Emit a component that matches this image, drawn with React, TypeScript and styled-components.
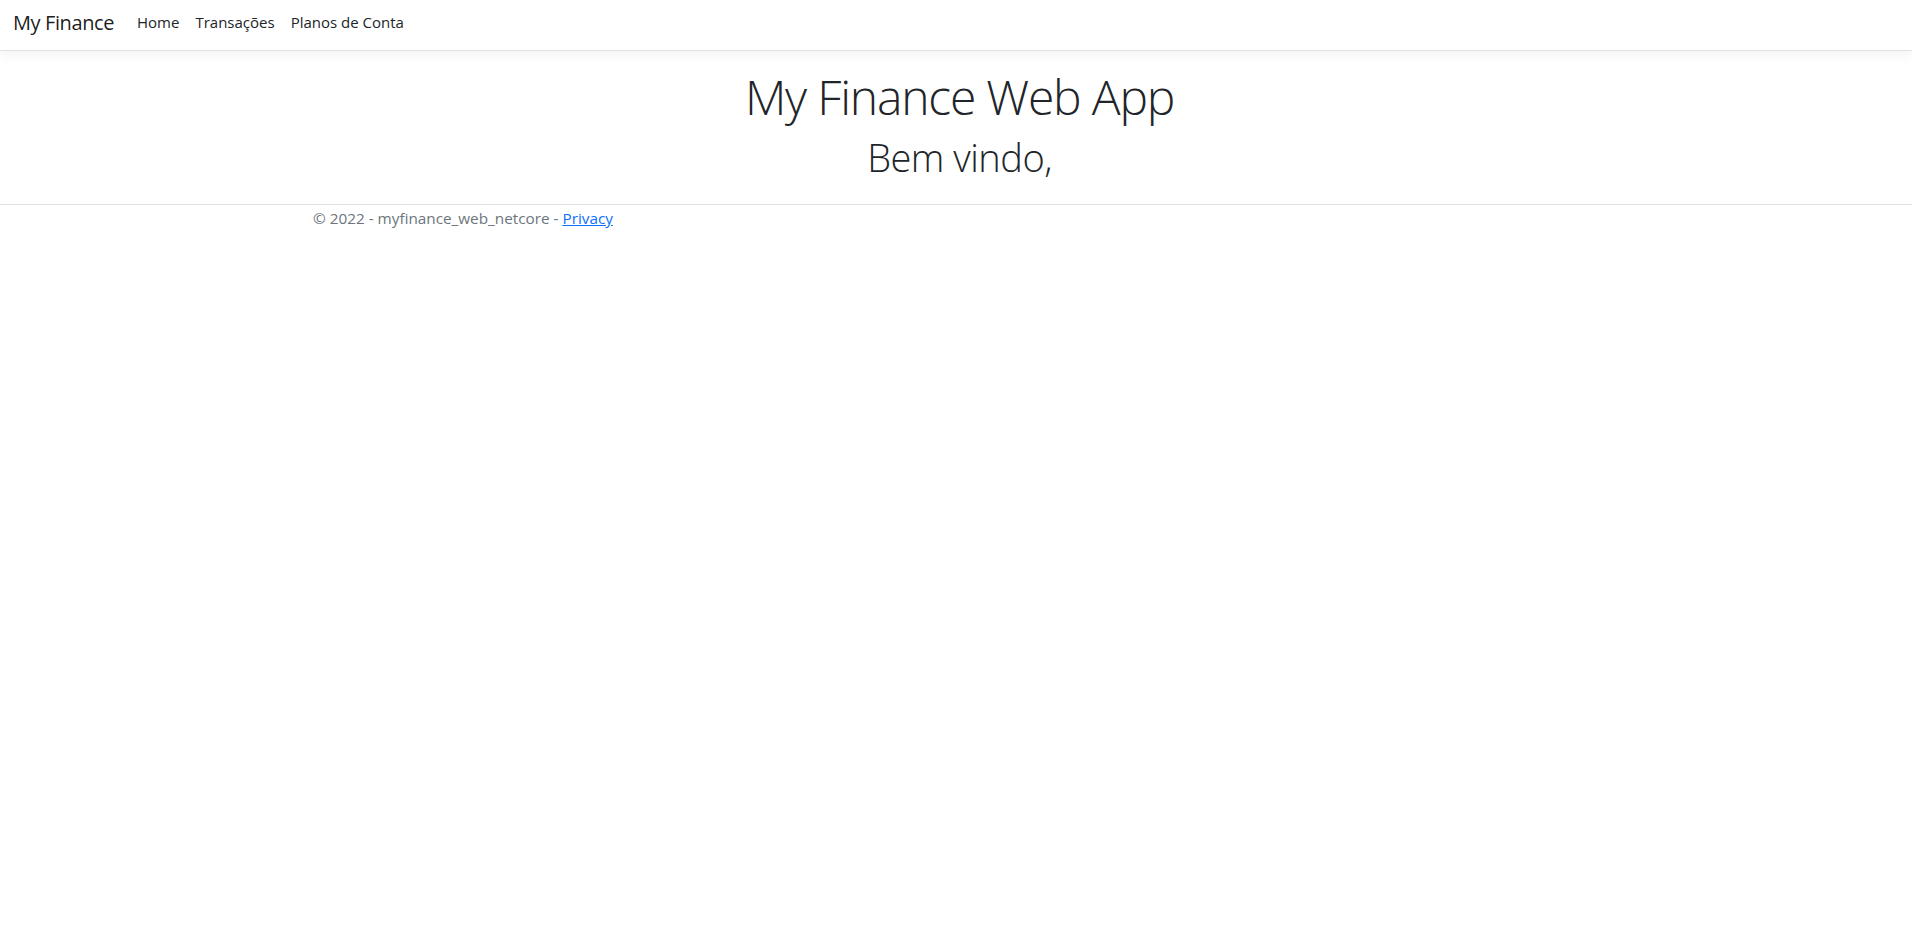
import { FC } from 'react';
import styled, { createGlobalStyle } from 'styled-components';

const GlobalStyle = createGlobalStyle`
  html, body {
    margin: 0;
    padding: 0;
    background: #fff;
  }
  body {
    font-family: 'Open Sans', 'Noto Sans', sans-serif;
    color: #212529;
    font-size: 15px;
    line-height: 1.5;
  }
`;

const Header = styled.header`
  border-bottom: 1px solid #dee2e6;
  box-shadow: 0 4px 12px rgba(0, 0, 0, 0.05);
`;

const Navbar = styled.nav`
  display: flex;
  align-items: center;
  height: 50px;
  padding: 0 13px 5px;
  box-sizing: border-box;
`;

const Brand = styled.a`
  font-size: 20px;
  letter-spacing: -0.4px;
  color: rgba(0, 0, 0, 0.9);
  text-decoration: none;
  margin-right: 15px;
  white-space: nowrap;
`;

const NavList = styled.ul`
  display: flex;
  list-style: none;
  margin: 0;
  padding: 0;
`;

const NavLink = styled.a`
  display: block;
  padding: 8px;
  font-size: 15px;
  color: #212529;
  text-decoration: none;
`;

const Container = styled.div`
  max-width: 1310px;
  margin: 0 auto;
  padding: 0 12px;
  box-sizing: border-box;
`;

const Main = styled.main`
  text-align: center;
  padding: 17px 0 24px 7px;
`;

const Display = styled.h1<{ size: number; tracking: number }>`
  margin: 0;
  font-size: ${({ size }) => size}px;
  letter-spacing: ${({ tracking }) => tracking}px;
  font-weight: 300;
  line-height: 1.2;
`;

const Subtitle = styled(Display)`
  margin-top: 9px;
`;

const Footer = styled.footer`
  border-top: 1px solid #dee2e6;
  color: #6c757d;
  font-size: 15.3px;
  padding-top: 2px;
`;

const FooterLink = styled.a`
  color: #0d6efd;
  text-decoration: underline;
`;

const links = ['Home', 'Transações', 'Planos de Conta'];

const App: FC = () => {
  return (
    <>
      <GlobalStyle />
      <Header>
        <Navbar>
          <Brand href="#">My Finance</Brand>
          <NavList>
            {links.map((l) => (
              <li key={l}>
                <NavLink href="#">{l}</NavLink>
              </li>
            ))}
          </NavList>
        </Navbar>
      </Header>
      <Main>
        <Display size={48} tracking={-1.2}>
          My Finance Web App
        </Display>
        <Subtitle as="h2" size={38} tracking={-0.5}>
          Bem vindo,
        </Subtitle>
      </Main>
      <Footer>
        <Container>
          © 2022 - myfinance_web_netcore - <FooterLink href="#">Privacy</FooterLink>
        </Container>
      </Footer>
    </>
  );
};

export default App;
